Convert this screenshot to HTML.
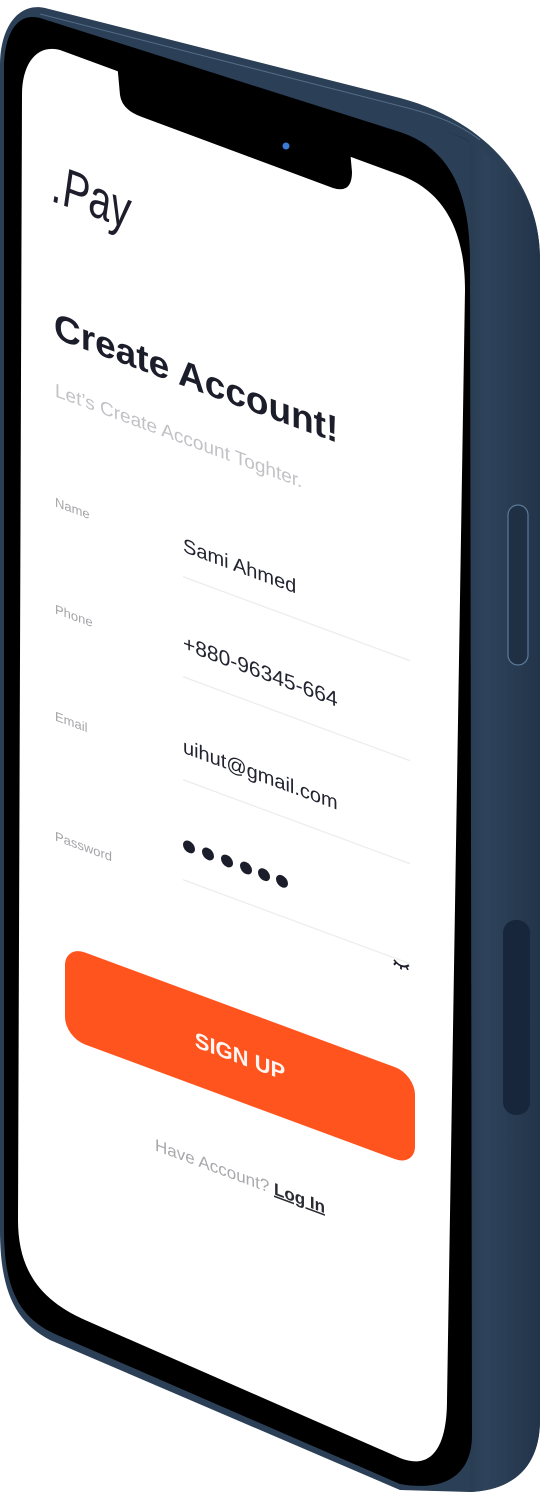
<!DOCTYPE html>
<html><head><meta charset="utf-8"><style>
html,body{margin:0;padding:0;background:#fff;width:542px;height:1495px;overflow:hidden}
svg{display:block}
text{font-family:"Liberation Sans",sans-serif}
</style></head><body>
<svg width="542" height="1495" viewBox="0 0 542 1495" xmlns="http://www.w3.org/2000/svg">
<defs>
<linearGradient id="side" x1="0" x2="1" y1="0" y2="0">
<stop offset="0" stop-color="#1c2b3c"/><stop offset="0.5" stop-color="#2e435b"/><stop offset="1" stop-color="#22344a"/>
</linearGradient>
</defs>
<path d="M45 8 L400 98 C470 116 540 170 540 260 L540 1420 C540 1465 515 1490 470 1492 L400 1490 L50 1340 C15 1322 0 1290 0 1230 L0 65 C0 28 18 2 45 8 Z" fill="#2b3f56"/>
<path d="M430 125 C500 150 540 190 540 260 L540 1420 C540 1465 515 1490 470 1492 L470 140 Z" fill="url(#side)"/>
<path d="M40 14 L400 106 C440 116 460 125 480 140" stroke="#6d8aa8" stroke-width="1" fill="none" opacity="0.6"/>
<rect x="508" y="505" width="20" height="160" rx="10" fill="#1f3044" stroke="#5d7a99" stroke-width="1.2"/>
<rect x="503" y="920" width="27" height="195" rx="13" fill="#17263a"/>
<path d="M40 18 L400 132 C445 147 470 185 470 260 L472 1435 C472 1475 445 1492 400 1484 L55 1334 C20 1318 4 1290 4 1230 L4 70 C4 32 18 12 40 18 Z" fill="#000"/>
<path d="M60 50 L400 175 C440 190 465 225 465 290 L447 1400 C447 1450 430 1470 400 1458 L85 1320 C40 1300 18 1270 18 1220 L22 95 C22 62 38 44 60 50 Z" fill="#fff"/>
<path d="M117 62 L350 150 L352 172 Q352 194 333 188 L142 117 Q122 110 120 95 Z" fill="#000"/>
<circle cx="286" cy="146" r="3.5" fill="#3a7bd5"/>
<g transform="matrix(1 0.37 0 1 0 0)">
  <text x="52" y="182" font-size="56" fill="#1d1d2b" font-family="DejaVu Sans, sans-serif" font-weight="300" font-style="italic" textLength="78" lengthAdjust="spacingAndGlyphs">.Pay</text>
  <text x="54" y="318" font-size="37" font-weight="bold" fill="#1c1d2a">Create Account!</text>
  <text x="55" y="376" font-size="19" fill="#c2c2c6">Let’s Create Account Toghter.</text>
  <text x="55" y="486" font-size="13" fill="#a4a4a8">Name</text>
  <text x="55" y="593" font-size="13" fill="#a4a4a8">Phone</text>
  <text x="55" y="700" font-size="13" fill="#a4a4a8">Email</text>
  <text x="55" y="820" font-size="13" fill="#a4a4a8">Password</text>
  <text x="183" y="484" font-size="20" fill="#22232f">Sami Ahmed</text>
  <text x="183" y="582" font-size="21" fill="#22232f">+880-96345-664</text>
  <text x="183" y="685" font-size="20" fill="#22232f">uihut@gmail.com</text>
  <g fill="#1c1d2a">
    <circle cx="189" cy="777" r="6"/><circle cx="208" cy="777" r="6"/><circle cx="227" cy="777" r="6"/>
    <circle cx="246" cy="777" r="6"/><circle cx="264" cy="777" r="6"/><circle cx="282" cy="777" r="6"/>
  </g>
  <g stroke="#ececee" stroke-width="1.3">
    <line x1="183" y1="509" x2="410" y2="509"/>
    <line x1="183" y1="609" x2="410" y2="609"/>
    <line x1="183" y1="712" x2="410" y2="712"/>
    <line x1="183" y1="812" x2="410" y2="812"/>
  </g>
  <path d="M394 814 Q401 821 409 814 M396 816 l-2 3 M401 818 l0 3 M406 816 l2 3" stroke="#1c1d2a" stroke-width="1.8" fill="none"/>
  <rect x="65" y="921" width="350" height="92" rx="20" fill="#ff541e"/>
  <text x="240" y="975" font-size="22" fill="#fff" text-anchor="middle" font-weight="bold" opacity="0.95">SIGN UP</text>
  <text x="155" y="1093" font-size="17" fill="#a9a9ad">Have Account? <tspan fill="#2a2a33" font-weight="bold" text-decoration="underline">Log In</tspan></text>
</g>
</svg>
</body></html>
